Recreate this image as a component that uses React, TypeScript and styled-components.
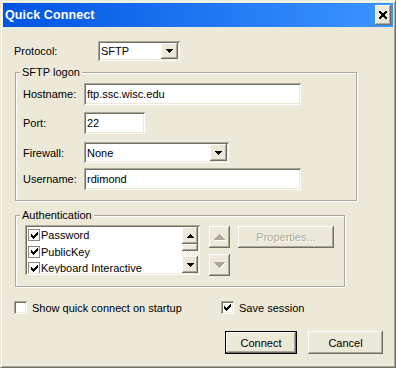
import React from "react";
import styled, { createGlobalStyle } from "styled-components";

const FACE = "#ECE9D8";
const SHADOW = "#ACA899";
const DARK = "#716F64";

const raised = `
  box-shadow: inset -1px -1px ${DARK}, inset 1px 1px #fff,
    inset -2px -2px ${SHADOW}, inset 2px 2px ${FACE};
`;

const sunken = `
  box-shadow: inset 1px 1px ${SHADOW}, inset -1px -1px #fff,
    inset 2px 2px ${DARK}, inset -2px -2px ${FACE};
`;

const GlobalStyle = createGlobalStyle`
  html, body {
    margin: 0;
    padding: 0;
    background: ${FACE};
  }
  body {
    font-family: "Liberation Sans", Arial, sans-serif;
    font-size: 11px;
    color: #000;
  }
`;

// pixel glyphs, drawn from rows of [x, width]
const pixelPath = (rows: [number, number][][]) =>
  rows
    .map((segs, y) => segs.map(([x, w]) => `M${x} ${y}h${w}v1h-${w}z`).join(""))
    .join("");

const CHECK = pixelPath([
  [[6, 1]],
  [[5, 2]],
  [[0, 1], [4, 3]],
  [[0, 2], [3, 3]],
  [[0, 5]],
  [[1, 3]],
  [[2, 1]],
]);

const CLOSE_X = pixelPath([
  [[0, 2], [6, 2]],
  [[0, 3], [5, 3]],
  [[1, 6]],
  [[2, 4]],
  [[2, 4]],
  [[1, 6]],
  [[0, 3], [5, 3]],
  [[0, 2], [6, 2]],
]);

const SMALL_DOWN = pixelPath([[[0, 7]], [[1, 5]], [[2, 3]], [[3, 1]]]);
const SMALL_UP = pixelPath([[[3, 1]], [[2, 3]], [[1, 5]], [[0, 7]]]);

const BIG_UP = pixelPath(
  Array.from({ length: 6 }, (_, i) => [[5 - i, 2 * i + 1]] as [number, number][])
);
const BIG_DOWN = pixelPath(
  Array.from({ length: 6 }, (_, i) => [[i, 11 - 2 * i]] as [number, number][])
);

const Glyph: React.FC<{ d: string; w: number; h: number; color?: string; etched?: boolean }> = ({
  d,
  w,
  h,
  color = "#000",
  etched,
}) => (
  <svg width={w + (etched ? 1 : 0)} height={h + (etched ? 1 : 0)} shapeRendering="crispEdges">
    {etched && <path d={d} fill="#fff" transform="translate(1 1)" />}
    <path d={d} fill={color} />
  </svg>
);

const Window = styled.div`
  width: 396px;
  height: 368px;
  box-sizing: border-box;
  background: ${FACE};
  border: 1px solid;
  border-color: ${FACE} ${DARK} ${DARK} ${FACE};
  box-shadow: inset 1px 1px #fff, inset -1px -1px ${SHADOW};
  padding: 2px;
  display: flex;
  flex-direction: column;
`;

const TitleBar = styled.div`
  height: 24px;
  flex: none;
  display: flex;
  align-items: center;
  padding: 0 2px;
  background: linear-gradient(to right, #0054e3, #3d95ff);
`;

const TitleText = styled.div`
  flex: 1;
  color: #fff;
  font-weight: bold;
  font-size: 12.5px;
  letter-spacing: 0.1px;
`;

const CloseButton = styled.div`
  width: 16px;
  height: 20px;
  background: ${FACE};
  ${raised}
  display: flex;
  align-items: center;
  justify-content: center;
  box-sizing: border-box;
`;

const Body = styled.div`
  flex: 1;
  display: flex;
  flex-direction: column;
  padding: 14px 10px 0 11px;
`;

const Row = styled.div<{ $mt?: number }>`
  display: flex;
  align-items: center;
  margin-top: ${(p) => p.$mt ?? 0}px;
`;

const Label = styled.div<{ $w: number }>`
  width: ${(p) => p.$w}px;
  flex: none;
`;

const TextBox = styled.input<{ $w: number; $h: number }>`
  width: ${(p) => p.$w}px;
  height: ${(p) => p.$h}px;
  box-sizing: border-box;
  border: none;
  outline: none;
  margin: 0;
  padding: 0 3px;
  background: #fff;
  font: inherit;
  color: #000;
  ${sunken}
`;

const Select = styled.div<{ $w: number; $h: number }>`
  width: ${(p) => p.$w}px;
  height: ${(p) => p.$h}px;
  box-sizing: border-box;
  padding: 2px;
  background: #fff;
  display: flex;
  align-items: center;
  ${sunken}
`;

const SelectValue = styled.div`
  flex: 1;
  padding-left: 1px;
`;

const DropButton = styled.div`
  width: 17px;
  height: 100%;
  background: ${FACE};
  ${raised}
  display: flex;
  align-items: center;
  justify-content: center;
`;

const Group = styled.div<{ $mt: number; $w: number; $h: number }>`
  position: relative;
  margin: ${(p) => p.$mt}px 0 0 1px;
  width: ${(p) => p.$w}px;
  height: ${(p) => p.$h}px;
  box-sizing: border-box;
  border: 1px solid ${SHADOW};
  box-shadow: inset 1px 1px #fff, 1px 1px #fff;
  padding: 10px 0 0 7px;
`;

const AuthGroup = styled(Group)`
  padding: 9px 0 0 9px;
  display: flex;
  align-items: flex-start;
`;

const Legend = styled.span`
  position: absolute;
  top: -7px;
  left: 4px;
  padding: 0 2px;
  line-height: 13px;
  background: ${FACE};
`;

const ListBox = styled.div`
  width: 175px;
  height: 50px;
  box-sizing: border-box;
  padding: 2px;
  background: #fff;
  display: flex;
  ${sunken}
`;

const Items = styled.div`
  flex: 1;
  overflow: hidden;
`;

const Item = styled.div`
  height: 16.5px;
  display: flex;
  align-items: center;
  padding-left: 1px;
  white-space: nowrap;
`;

const ListCheck = styled.div`
  width: 12px;
  height: 12px;
  box-sizing: border-box;
  border: 1px solid #8b8878;
  background: #fff;
  margin-right: 1px;
  display: flex;
  align-items: center;
  justify-content: center;
`;

const ScrollBar = styled.div`
  width: 16px;
  display: flex;
  flex-direction: column;
`;

const ScrollButton = styled.div`
  height: 17px;
  background: ${FACE};
  ${raised}
  display: flex;
  align-items: center;
  justify-content: center;
`;

const Thumb = styled.div`
  height: 7px;
  background: ${FACE};
  ${raised}
`;

const Track = styled.div`
  height: 5px;
  background: repeating-conic-gradient(#fff 0 25%, ${FACE} 0 50%) 0 0 / 2px 2px;
`;

const MoveColumn = styled.div`
  display: flex;
  flex-direction: column;
  gap: 6px;
  margin: 1px 0 0 9px;
`;

const Button = styled.div<{ $w: number; $h?: number; $default?: boolean; $disabled?: boolean }>`
  width: ${(p) => p.$w}px;
  height: ${(p) => p.$h ?? 22}px;
  box-sizing: border-box;
  background: ${FACE};
  ${raised}
  display: flex;
  align-items: center;
  justify-content: center;
  color: ${(p) => (p.$disabled ? SHADOW : "#000")};
  text-shadow: ${(p) => (p.$disabled ? "1px 1px #fff" : "none")};
  ${(p) => (p.$default ? "border: 1px solid #000;" : "")}
`;

const PropertiesButton = styled(Button)`
  margin: 1px 0 0 8px;
`;

const CheckRow = styled.div`
  display: flex;
  align-items: center;
  margin-top: 14px;
`;

const CheckItem = styled.div<{ $w?: number }>`
  display: flex;
  align-items: center;
  gap: 5px;
  width: ${(p) => (p.$w ? `${p.$w}px` : "auto")};
`;

const CheckBox = styled.div`
  width: 13px;
  height: 13px;
  box-sizing: border-box;
  background: #fff;
  ${sunken}
  display: flex;
  align-items: center;
  justify-content: center;
`;

const ButtonRow = styled.div`
  display: flex;
  justify-content: flex-end;
  gap: 11px;
  margin-top: 17px;
`;

const authMethods = ["Password", "PublicKey", "Keyboard Interactive"];

const App: React.FC = () => {
  return (
    <>
      <GlobalStyle />
      <Window>
        <TitleBar>
          <TitleText>Quick Connect</TitleText>
          <CloseButton>
            <Glyph d={CLOSE_X} w={8} h={8} />
          </CloseButton>
        </TitleBar>
        <Body>
          <Row>
            <Label $w={84}>Protocol:</Label>
            <Select $w={82} $h={20}>
              <SelectValue>SFTP</SelectValue>
              <DropButton>
                <Glyph d={SMALL_DOWN} w={7} h={4} />
              </DropButton>
            </Select>
          </Row>

          <Group $mt={11} $w={342} $h={129}>
            <Legend>SFTP logon</Legend>
            <Row>
              <Label $w={61}>Hostname:</Label>
              <TextBox $w={217} $h={22} defaultValue="ftp.ssc.wisc.edu" />
            </Row>
            <Row $mt={7}>
              <Label $w={61}>Port:</Label>
              <TextBox $w={61} $h={22} defaultValue="22" />
            </Row>
            <Row $mt={8}>
              <Label $w={61}>Firewall:</Label>
              <Select $w={145} $h={21}>
                <SelectValue>None</SelectValue>
                <DropButton>
                  <Glyph d={SMALL_DOWN} w={7} h={4} />
                </DropButton>
              </Select>
            </Row>
            <Row $mt={5}>
              <Label $w={61}>Username:</Label>
              <TextBox $w={217} $h={22} defaultValue="rdimond" />
            </Row>
          </Group>

          <AuthGroup $mt={14} $w={330} $h={72}>
            <Legend>Authentication</Legend>
            <ListBox>
              <Items>
                {authMethods.map((m) => (
                  <Item key={m}>
                    <ListCheck>
                      <Glyph d={CHECK} w={7} h={7} />
                    </ListCheck>
                    {m}
                  </Item>
                ))}
              </Items>
              <ScrollBar>
                <ScrollButton>
                  <Glyph d={SMALL_UP} w={7} h={4} />
                </ScrollButton>
                <Thumb />
                <Track />
                <ScrollButton>
                  <Glyph d={SMALL_DOWN} w={7} h={4} />
                </ScrollButton>
              </ScrollBar>
            </ListBox>
            <MoveColumn>
              <Button $w={21} $disabled>
                <Glyph d={BIG_UP} w={11} h={6} color={SHADOW} etched />
              </Button>
              <Button $w={21} $disabled>
                <Glyph d={BIG_DOWN} w={11} h={6} color={SHADOW} etched />
              </Button>
            </MoveColumn>
            <PropertiesButton $w={96} $disabled>
              Properties...
            </PropertiesButton>
          </AuthGroup>

          <CheckRow>
            <CheckItem $w={207}>
              <CheckBox />
              Show quick connect on startup
            </CheckItem>
            <CheckItem>
              <CheckBox>
                <Glyph d={CHECK} w={7} h={7} />
              </CheckBox>
              Save session
            </CheckItem>
          </CheckRow>

          <ButtonRow>
            <Button $w={72} $h={23} $default>
              Connect
            </Button>
            <Button $w={75} $h={23}>
              Cancel
            </Button>
          </ButtonRow>
        </Body>
      </Window>
    </>
  );
};

export default App;
